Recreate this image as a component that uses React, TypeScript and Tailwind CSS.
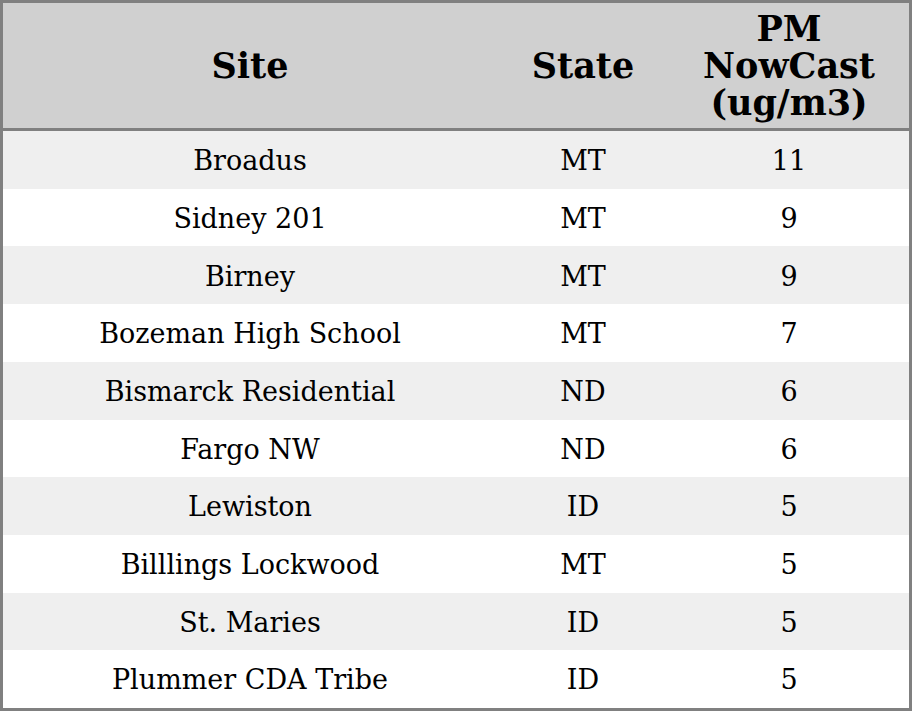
const rows = [
  { site: "Broadus", state: "MT", pm: "11" },
  { site: "Sidney 201", state: "MT", pm: "9" },
  { site: "Birney", state: "MT", pm: "9" },
  { site: "Bozeman High School", state: "MT", pm: "7" },
  { site: "Bismarck Residential", state: "ND", pm: "6" },
  { site: "Fargo NW", state: "ND", pm: "6" },
  { site: "Lewiston", state: "ID", pm: "5" },
  { site: "Billlings Lockwood", state: "MT", pm: "5" },
  { site: "St. Maries", state: "ID", pm: "5" },
  { site: "Plummer CDA Tribe", state: "ID", pm: "5" },
]

const App = () => {
  return (
    <div className="w-[912px] h-[711px] bg-white font-['DejaVu_Serif',serif] text-black">
      <div className="w-[912px] h-[711px] border-[3px] border-[#808080] flex flex-col">
        <div className="h-[128px] shrink-0 bg-[#d0d0d0] border-b-[3px] border-[#808080] flex items-center font-bold text-[35px] leading-[37px] text-center">
          <div className="w-[494px]">Site</div>
          <div className="w-[172px]">State</div>
          <div className="w-[240px]">PM<br />NowCast<br />(ug/m3)</div>
        </div>
        {rows.map((r, i) => (
          <div
            key={r.site}
            className={`flex-1 flex items-center pt-[3px] text-[27px] text-center ${i % 2 === 0 ? 'bg-[#efefef]' : 'bg-white'}`}
          >
            <div className="w-[494px]">{r.site}</div>
            <div className="w-[172px]">{r.state}</div>
            <div className="w-[240px]">{r.pm}</div>
          </div>
        ))}
      </div>
    </div>
  )
}

export default App
